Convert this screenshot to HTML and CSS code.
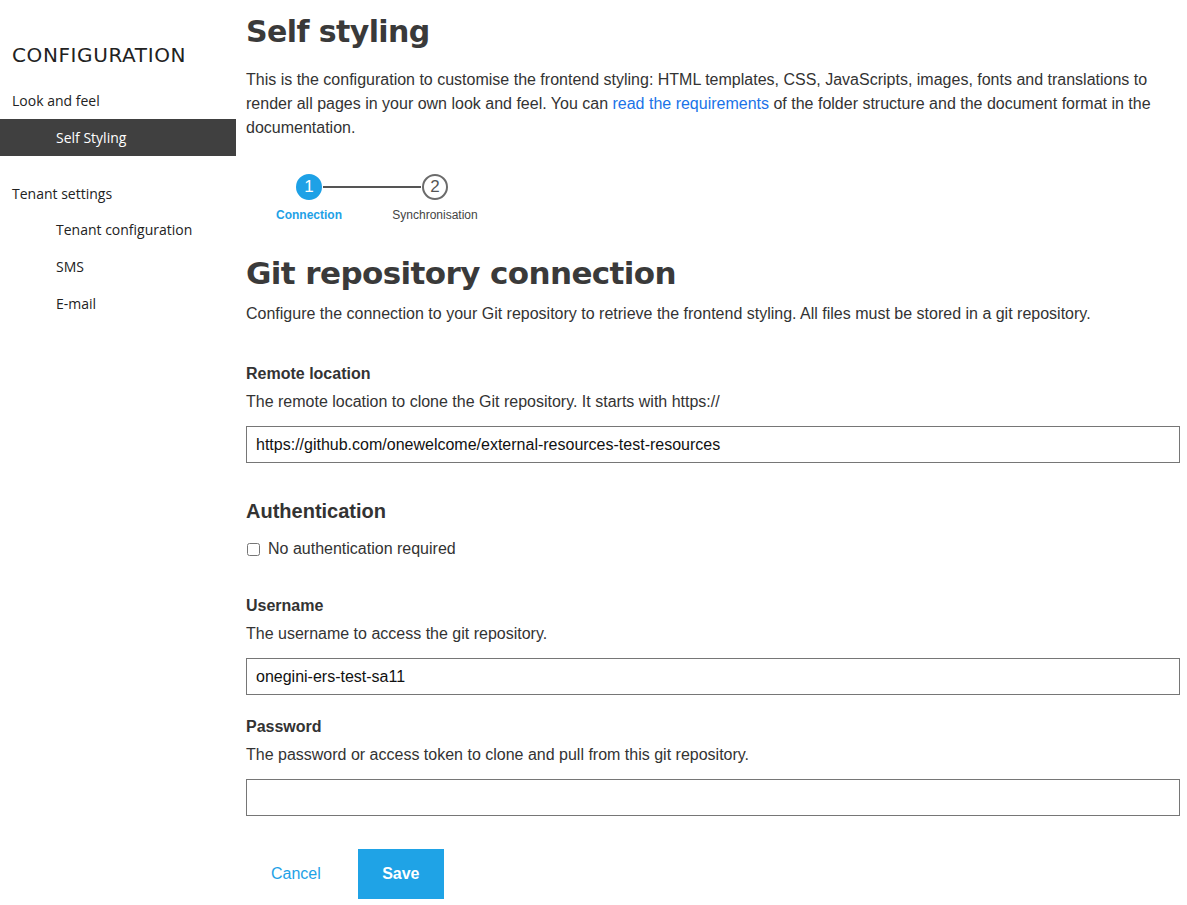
FILE: index.html
```
<!DOCTYPE html>
<html>
<head>
<meta charset="utf-8">
<link rel="stylesheet" href="styles.css">
</head>
<body>
<div class="layout">
  <nav class="sidebar">
    <div class="side-title">CONFIGURATION</div>
    <div class="group">Look and feel</div>
    <div class="item active">Self Styling</div>
    <div class="group second">Tenant settings</div>
    <div class="item">Tenant configuration</div>
    <div class="item">SMS</div>
    <div class="item">E-mail</div>
  </nav>
  <main class="main">
    <h1 class="title">Self styling</h1>
    <p class="intro">This is the configuration to customise the frontend styling: HTML templates, CSS, JavaScripts, images, fonts and translations to render all pages in your own look and feel. You can <a href="#" class="link">read the requirements</a> of the folder structure and the document format in the documentation.</p>

    <div class="stepper">
      <div class="step current">
        <div class="circle">1</div>
        <div class="step-label">Connection</div>
      </div>
      <div class="connector"></div>
      <div class="step">
        <div class="circle">2</div>
        <div class="step-label">Synchronisation</div>
      </div>
    </div>

    <h2 class="section-title">Git repository connection</h2>
    <p class="section-desc">Configure the connection to your Git repository to retrieve the frontend styling. All files must be stored in a git repository.</p>

    <div class="field first">
      <div class="label">Remote location</div>
      <div class="help">The remote location to clone the Git repository. It starts with https://</div>
      <input class="input" type="text" value="https://github.com/onewelcome/external-resources-test-resources">
    </div>

    <h3 class="sub-title">Authentication</h3>
    <label class="check"><input type="checkbox" class="checkbox"> No authentication required</label>

    <div class="field user">
      <div class="label">Username</div>
      <div class="help">The username to access the git repository.</div>
      <input class="input" type="text" value="onegini-ers-test-sa11">
    </div>

    <div class="field pass">
      <div class="label">Password</div>
      <div class="help">The password or access token to clone and pull from this git repository.</div>
      <input class="input" type="password" value="">
    </div>

    <div class="actions">
      <button class="btn-cancel">Cancel</button>
      <button class="btn-save">Save</button>
    </div>
  </main>
</div>
</body>
</html>
```
FILE: styles.css
```
* { box-sizing: border-box; }
html, body { margin: 0; padding: 0; background: #fff; }
body { font-family: "Liberation Sans", Arial, sans-serif; color: #333; }

.layout { display: flex; align-items: flex-start; }

.sidebar {
  width: 236px;
  flex: 0 0 236px;
  padding-top: 42px;
  font-family: "Open Sans", sans-serif;
  font-size: 14px;
  color: #222;
}
.side-title {
  font-family: "DejaVu Sans", sans-serif;
  font-size: 20px;
  letter-spacing: 0.6px;
  padding-left: 12px;
  line-height: 26px;
  margin-bottom: 23px;
  color: #222;
}
.group { padding-left: 12px; line-height: 20px; margin-bottom: 8px; }
.group.second { margin-top: 28px; margin-bottom: 16px; }
.item { padding-left: 56px; line-height: 37px; height: 37px; }
.item.active { background: #404040; color: #fff; }
.group.second ~ .item { line-height: 20px; height: 20px; margin-bottom: 17px; }

.main { flex: 1; padding: 0 7px 0 10px; }

.title {
  font-family: "DejaVu Sans", sans-serif;
  font-weight: bold;
  font-size: 30px;
  letter-spacing: -0.6px;
  margin: 14px 0 0 0;
  line-height: 36px;
  color: #3a3a3a;
}
.intro {
  font-size: 16px;
  line-height: 24px;
  margin: 18px 0 0 0;
  color: #333;
}
.link { color: #1a73e8; text-decoration: none; }

.stepper {
  display: flex;
  align-items: flex-start;
  margin-top: 34px;
  padding-left: 18px;
}
.step { display: flex; flex-direction: column; align-items: center; width: 90px; position: relative; z-index: 1; }
.circle {
  width: 26px; height: 26px;
  border-radius: 50%;
  border: 2px solid #6b6b6b;
  color: #555;
  font-size: 17px;
  line-height: 22px;
  text-align: center;
  background: #fff;
}
.step.current .circle { background: #1ea1e6; border-color: #1ea1e6; color: #fff; }
.step-label { font-size: 12px; margin-top: 8px; color: #444; white-space: nowrap; }
.step.current .step-label { color: #1ea1e6; font-weight: bold; }
.connector { width: 98px; height: 2px; background: #555; margin: 12px -31px 0 -31px; position: relative; z-index: 0; }

.section-title {
  font-family: "DejaVu Sans", sans-serif;
  font-weight: bold;
  font-size: 31px;
  letter-spacing: -0.6px;
  line-height: 38px;
  margin: 32px 0 0 0;
  color: #3a3a3a;
}
.section-desc { font-size: 16px; line-height: 24px; margin: 10px 0 0 0; }

.field.first { margin-top: 36px; }
.label { font-weight: bold; font-size: 16px; line-height: 24px; color: #333; }
.help { font-size: 16px; line-height: 24px; margin-top: 4px; color: #333; }
.input {
  display: block;
  width: 100%;
  height: 37px;
  margin-top: 12px;
  border: 1px solid #767676;
  border-radius: 0;
  padding: 0 9px;
  font-family: "Liberation Sans", Arial, sans-serif;
  font-size: 16px;
  color: #111;
  outline: none;
}

.sub-title { font-size: 20px; font-weight: bold; margin: 36px 0 0 0; line-height: 24px; color: #333; }
.check { display: flex; align-items: center; font-size: 16px; margin-top: 14px; line-height: 24px; }
.checkbox { width: 13px; height: 13px; margin: 0 8px 0 1px; }

.field.user { margin-top: 33px; }
.field.pass { margin-top: 20px; }

.actions { display: flex; align-items: center; margin-top: 33px; }
.btn-cancel {
  background: none; border: none;
  color: #1ea1e6; font-family: "Liberation Sans", Arial, sans-serif; font-size: 16px;
  padding: 0 25px; height: 50px; margin-right: 12px; cursor: pointer;
}
.btn-save {
  background: #1fa3e6; border: none; color: #fff;
  font-family: "Liberation Sans", Arial, sans-serif; font-size: 16px; font-weight: bold;
  width: 86px; height: 50px; cursor: pointer;
}
```
